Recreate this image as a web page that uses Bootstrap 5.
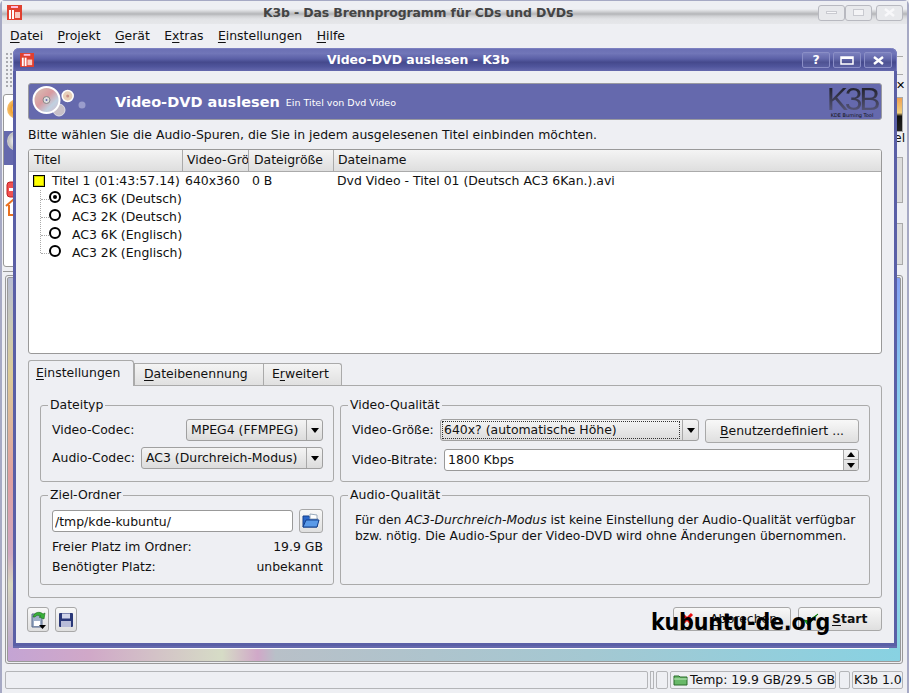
<!DOCTYPE html>
<html lang="de">
<head>
    <meta charset="UTF-8">
    <title>K3b - Das Brennprogramm für CDs und DVDs</title>
    <link rel="stylesheet" href="https://cdn.jsdelivr.net/npm/bootstrap@5.3.0/dist/css/bootstrap.min.css">
    <style>
        html, body { margin: 0; width: 909px; height: 693px; overflow: hidden; background: #eeeff3; }
        body, .btn, .form-control, legend { font: 12.45px/16px "DejaVu Sans", sans-serif; color: #111; }
        u { text-underline-offset: 2px; }

        /* main window */
        .main-win { position: relative; width: 909px; height: 693px; background: #eeeff3; border: 1px solid #a6a9c4; border-width: 1px 2px 0 2px; border-radius: 5px 5px 0 0; }
        .main-title { height: 23px; padding-left: 5px; background: linear-gradient(#eeeff3 0, #eeeff3 8px, #d8d9dc 10px, #b4b5b8 13px, #cfd0d3 15px, #e2e3e6 18px, #e6e7ea 23px); }
        .main-title-text { font-weight: 700; color: #444; letter-spacing: -.12px; margin-left: 241px; width: 312px; white-space: nowrap; }
        .deco-btn { width: 27px; height: 16px; border: 1px solid #b8b9c0; border-radius: 3px; background: #e8e9ec; }
        .deco-glyph { width: 11px; height: 7px; border: 1px solid #c9cad0; background: #f4f4f6; }
        .deco-dash { width: 11px; height: 3px; background: #f8f8fa; border: 1px solid #c9cad0; }
        .menu-row { height: 23px; padding-left: 8px; gap: 14.4px; }

        .work { height: 617px; }
        .top-zone { height: 228px; }
        .grip { width: 8px; height: 35px; margin: 5px 0 7px 3px; background: radial-gradient(circle, #a9aab0 1px, transparent 1px) 0 0 / 4px 4px; }
        .left-box { width: 60px; height: 173px; margin-left: 1px; background: #fff; border: 1px solid #999; border-radius: 3px; }
        .left-rule { width: 20px; margin: 4px 0 0 1px; border-top: 1px solid #999; }
        .sel-row { height: 34px; margin-top: 12px; background: #6569ad; }
        .disc-o { width: 20px; height: 20px; margin-left: 3px; border-radius: 50%; background: radial-gradient(circle, #fff 12%, #f0a030 40%, #f8d090 85%); }
        .disc-g { width: 20px; height: 20px; margin-left: 3px; border-radius: 50%; background: radial-gradient(circle, #fff 12%, #c0c0c0 60%, #eee 90%); }
        .right-col { width: 8px; margin-right: 4px; }
        .rs-btn { height: 19px; margin-top: 9px; border: 1px solid #aaa; border-right-width: 0; background: #f0f0f0; width: 8px; }
        .rs-x { font-size: 11px; line-height: 14px; margin: 4px 0 4px 1px; font-weight: 700; color: #000; white-space: nowrap; }
        .rs-img { height: 35px; background: linear-gradient(#f0a050 0, #f0d080 45%, #111 55%, #222 100%); border: 1px solid #aaa; }
        .rs-txt { line-height: 12px; margin: 0 0 13px -1px; white-space: nowrap; }
        .rs-gray { height: 46px; background: #dcdcdc; border: 1px solid #aaa; margin-bottom: 20px; }
        .rs-gray2 { height: 42px; background: #dcdcdc; border: 1px solid #aaa; }

        .rainbow-frame { height: 389px; margin: 0 4px 0 3px; padding: 1px; border: 1px solid #999; border-radius: 3px; }
        .rainbow {
            height: 100%; border: 1px solid #999; border-radius: 2px;
            background:
                linear-gradient(90deg, #c4a4d4 0, #d0a8c8 9%, #d6dcc6 24%, #d0a8c8 28%, #b8c0c8 30%, #a4c8d2 65%, #88d2e2 100%) bottom / 100% 14px no-repeat,
                linear-gradient(#b8bdd2 0, #c9c9b8 12%, #dccb98 25%, #e0a0a0 52%, #d0a8c0 72%, #d8d8c0 80%, #b8a0d0 100%) left / 50% 100% no-repeat,
                linear-gradient(#84a0f4 0, #88c8f0 25%, #98e0e8 60%, #88d2e2 100%) right / 50% 100% no-repeat;
        }

        .status-row { height: 18px; margin: 7px 4px 0 3px; gap: 2px; }
        .status-cell { height: 18px; border: 1px solid #b4b5b8; border-radius: 2px; line-height: 16px; padding: 0 2px; white-space: nowrap; }
        .grip-v { width: 4px; height: 18px; border: 1px solid #b4b5b8; }
        .st-blank { width: 12px; padding: 0; }
        .st-temp { width: 166px; }
        .st-temp svg { margin-right: 2px; }
        .st-blank2 { width: 11px; padding: 0; margin-left: 1px; }
        .st-ver { width: 51px; padding: 0 1px; }

        /* dialog */
        .dialog { position: absolute; left: 11px; top: 47px; width: 884px; height: 598px; background: #eeeff3; border: 3px solid #5a5fa6; border-top: 0; border-radius: 6px 6px 0 0; box-shadow: 0 2px 0 #6569ad; }
        .dialog::after { content: ""; position: absolute; left: 3px; right: 5px; bottom: -6px; height: 1px; background: #fff; }
        .dlg-title { height: 23px; margin: 0 -3px; padding-left: 6px; border-radius: 6px 6px 0 0; border: 1px solid #7c80c0; border-bottom: 0; color: #fff; background: linear-gradient(#6b70b4 0, #7176b8 20%, #5a5fa6 45%, #45498c 60%, #50559c 80%, #6569ad 100%); }
        .dlg-title-text { font-weight: 700; margin-left: 293px; width: 183px; white-space: nowrap; }
        .dlg-btns { gap: 3px; }
        .dlg-btn { width: 28px; height: 16px; border: 1px solid #8a8ec6; border-radius: 2px; background: rgba(255, 255, 255, .06); color: #fff; font-weight: 700; line-height: 14px; text-align: center; }
        .dlg-body { padding: 12px 12px 0 12px; }

        .banner { height: 37px; background: #6569ad; border: 1px solid #9a9aa0; border-radius: 3px; color: #fff; padding-left: 2px; }
        .banner-title { font-size: 14.5px; font-weight: 700; margin-left: 20px; white-space: nowrap; }
        .banner-sub { font-size: 9.5px; margin-left: 6px; padding-top: 3px; white-space: nowrap; }
        .k3b-logo { width: 54px; line-height: 1; text-align: center; margin-right: 2px; }
        .k3b-big { font: 32px/28px "Liberation Sans", sans-serif; letter-spacing: -3.3px; background: linear-gradient(#1c1c24, #5a5a80); -webkit-background-clip: text; background-clip: text; color: transparent; display: block; white-space: nowrap; }
        .k3b-small { font-size: 5px; line-height: 5px; color: #111; display: block; white-space: nowrap; }
        .info-line { height: 29px; line-height: 29px; white-space: nowrap; }

        .tree { height: 205px; background: #fff; border: 1px solid #999; border-radius: 3px; overflow: hidden; }
        .tree-head { height: 22px; background: linear-gradient(#f4f4f4, #dedede); border-bottom: 1px solid #aaa; }
        .tree-head > div { height: 21px; line-height: 20px; padding-left: 4px; border-right: 1px solid #aaa; overflow: hidden; white-space: nowrap; }
        .tree-head > .tw-1 { padding-left: 5px; }
        .tree-head > .tw-3 { padding-left: 5px; }
        .tw-1 { width: 154px; }
        .tw-2 { width: 66px; }
        .tw-3 { width: 85px; }
        .cell-p { padding-left: 2px; }
        .cell-q { padding-left: 3px; }
        .tree-row { height: 18px; line-height: 18px; white-space: nowrap; }
        .check-box { width: 12px; height: 12px; margin: 0 7px 0 4px; background: #ff0; border: 1px solid #000; box-shadow: inset 0 0 0 1px #cc0; flex: none; }
        .tree-kids { margin: 0 0 0 11px; height: 63px; border-left: 1px dotted #aaa; }
        .tree-kid { height: 18px; line-height: 18px; margin-left: 0; white-space: nowrap; }
        .tree-kid::before { content: ""; width: 8px; border-top: 1px dotted #aaa; }
        .radio-dot { width: 12px; height: 12px; margin-right: 11px; border: 2px solid #000; border-radius: 50%; background: #fff; display: flex; align-items: center; justify-content: center; position: relative; top: -2px; }
        .radio-dot.on::after { content: ""; width: 4px; height: 4px; background: #000; border-radius: 50%; }

        .tab-row { height: 31px; padding-top: 6px; border: 0; flex-wrap: nowrap; align-items: flex-end; }
        .tab-item { height: 22px; border: 1px solid #aaa; border-right-width: 0; border-bottom: 0; border-radius: 0; background: linear-gradient(#f4f4f4, #e0e0e0); color: #111; line-height: 20px; white-space: nowrap; }
        .tab-item:last-child { border-right-width: 1px; border-radius: 0 3px 0 0; }
        .tab-item.is-open { height: 26px; margin-bottom: -1px; background: #eeeff3; border: 1px solid #aaa; border-bottom: 0; border-radius: 3px 3px 0 0; line-height: 24px; position: relative; z-index: 1; }
        .tw-einst { width: 106px; padding-left: 7px; }
        .tw-datei { width: 129px; padding-left: 9px; }
        .tw-erw { width: 79px; padding-left: 8px; }
        .tab-panel { height: 213px; border: 1px solid #aaa; border-radius: 0 3px 3px 3px; padding: 12px 11px 0 11px; display: grid; grid-template-columns: 294px 530px; grid-template-rows: 90px 97px; column-gap: 6px; }

        fieldset.qt-group { border: 1px solid #aaa; border-radius: 3px; margin: 0; padding: 0 10px 0 11px; min-width: 0; }
        fieldset.qt-group legend { float: none; width: auto; margin: 0 0 0 -4px; padding: 0 2px; line-height: 14px; }
        .h-q { height: 84px; }
        .h-z { height: 97px; }
        .form-line { height: 22px; margin-top: 6px; white-space: nowrap; }
        .form-line.first { margin-top: 7px; }
        .form-line.spin-line { margin-top: 8px; }
        .lb-groesse { width: 88px; }
        .lb-bitrate { width: 92px; }

        .qt-btn { border: 1px solid #a8a8a8; border-radius: 3px; background: linear-gradient(#f8f8f8, #dfdfdf); padding: 0; white-space: nowrap; }
        .combo { height: 22px; border: 1px solid #a0a0a0; border-radius: 3px; background: linear-gradient(#f4f4f4, #dcdcdc); line-height: 20px; white-space: nowrap; }
        .cw-mpeg { width: 137px; }
        .cw-ac3 { width: 182px; }
        .cw-size { width: 259px; }
        .combo-val { padding: 0 4px; flex: 1 1 auto; }
        .combo-val.has-focus { margin: 2px 3px 2px 2px; padding: 0 1px; line-height: 15px; outline: 1px dotted #333; }
        .combo-arrow { width: 16px; border-left: 1px solid #a8a8a8; display: flex; align-items: center; justify-content: center; }
        .combo-arrow::after { content: ""; border: 4px solid transparent; border-top: 5px solid #000; border-bottom: 0; }
        .custom-btn { width: 154px; height: 24px; align-self: flex-start; }
        .qt-input.form-control { width: 241px; height: 22px; border: 1px solid #999; border-radius: 3px; padding: 0 2px; box-shadow: none; min-height: 0; color: #111; }
        .folder-row { height: 24px; margin-top: 7px; }
        .folder-btn { width: 24px; height: 24px; }
        .spin { height: 22px; background: #fff; border: 1px solid #999; border-radius: 3px; line-height: 20px; padding-left: 3px; overflow: hidden; }
        .spin-btns { width: 15px; border-left: 1px solid #a8a8a8; background: linear-gradient(#f4f4f4, #dcdcdc); }
        .spin-btns > div { height: 50%; display: flex; align-items: center; justify-content: center; }
        .spin-up { border-bottom: 1px solid #a8a8a8; }
        .spin-up::after { content: ""; border: 4px solid transparent; border-bottom: 5px solid #000; border-top: 0; }
        .spin-down::after { content: ""; border: 4px solid transparent; border-top: 5px solid #000; border-bottom: 0; }
        .audio-text { margin: 10px 0 0 3px; font-size: 12.3px; line-height: 16px; white-space: nowrap; }
        .space-line { height: 20px; line-height: 20px; }

        .footer-row { height: 25px; margin-top: 9px; }
        .icon-btn { width: 22px; height: 25px; margin-right: 6px; display: flex; align-items: center; justify-content: center; }
        .icon-btn:first-child { margin-left: -1px; }
        .dlg-foot { height: 24px; display: flex; align-items: center; }
        .abort-btn { width: 118px; margin-right: 7px; padding-left: 6px; }
        .start-btn { width: 84px; padding-left: 4px; font-weight: 700; }
        .start-btn svg { margin-right: 13px; }

        .watermark { position: absolute; left: 649px; top: 605px; font: 700 23px/32px "DejaVu Sans", sans-serif; font-stretch: condensed; letter-spacing: -.2px; color: #000; white-space: nowrap; z-index: 5; }
    </style>
</head>
<body>
    <div class="main-win">
        <div class="main-title d-flex align-items-center">
            <svg width="15" height="15" viewBox="0 0 15 15" class="flex-shrink-0"><rect width="15" height="15" fill="#e04030"/><rect x="2" y="5" width="2" height="9" fill="#fff"/><rect x="5" y="5" width="2" height="9" fill="#fff"/><rect x="8" y="7" width="5" height="6" fill="#f8c8c0"/><rect x="4" y="1" width="7" height="2" fill="#fbd"/></svg>
            <div class="main-title-text">K3b - Das Brennprogramm für CDs und DVDs</div>
            <div class="ms-auto d-flex me-1">
                <div class="deco-btn d-flex align-items-center justify-content-center"><div class="deco-dash"></div></div>
                <div class="deco-btn d-flex align-items-center justify-content-center me-1"><div class="deco-glyph"></div></div>
                <div class="deco-btn d-flex align-items-center justify-content-center">
                    <svg width="13" height="9" viewBox="0 0 13 9"><path d="M2 1l9 7M11 1l-9 7" stroke="#f8f8fa" stroke-width="2.5"/></svg>
                </div>
            </div>
        </div>
        <div class="menu-row d-flex align-items-center">
            <span><u>D</u>atei</span><span><u>P</u>rojekt</span><span><u>G</u>erät</span><span>E<u>x</u>tras</span><span><u>E</u>instellungen</span><span><u>H</u>ilfe</span>
        </div>

        <div class="work">
            <div class="top-zone d-flex justify-content-between">
                <div>
                    <div class="grip"></div>
                    <div class="left-box">
                        <div class="disc-o mt-1"></div>
                        <div class="sel-row"><div class="disc-g"></div></div>
                        <svg class="d-block mt-3" width="34" height="36" viewBox="4 0 34 36"><rect x="7" y="1" width="14" height="15" rx="3" fill="#f05050" stroke="#c02020"/><rect x="9" y="7" width="10" height="3" fill="#fff"/><path d="M6 25l8-7 8 7M9 24v10h10V24" fill="#fff" stroke="#e87020" stroke-width="2"/></svg>
                    </div>
                    <div class="left-rule"></div>
                </div>
                <div class="right-col">
                    <div class="rs-btn"></div>
                    <div class="rs-x">✕</div>
                    <div class="rs-img"></div>
                    <div class="rs-txt">el</div>
                    <div class="rs-gray"></div>
                    <div class="rs-gray2"></div>
                </div>
            </div>
            <div class="rainbow-frame"><div class="rainbow"></div></div>
        </div>

        <div class="status-row d-flex">
            <div class="status-cell flex-grow-1"></div>
            <div class="grip-v"></div>
            <div class="status-cell st-blank"></div>
            <div class="status-cell st-temp d-flex align-items-center">
                <svg class="flex-shrink-0" width="15" height="12" viewBox="0 0 15 12"><path d="M1 2h5l1 1h7v8H1z" fill="#68b868" stroke="#2a6a2a"/><path d="M1 5h13" stroke="#c0e8c0"/></svg>Temp: 19.9 GB/29.5 GB
            </div>
            <div class="status-cell st-blank2"></div>
            <div class="status-cell st-ver">K3b 1.0</div>
        </div>

        <div class="dialog">
            <div class="dlg-title d-flex align-items-center">
                <svg width="14" height="14" viewBox="0 0 15 15" class="flex-shrink-0"><rect width="15" height="15" fill="#e04030"/><rect x="2" y="5" width="2" height="9" fill="#fff"/><rect x="5" y="5" width="2" height="9" fill="#fff"/><rect x="8" y="7" width="5" height="6" fill="#f8c8c0"/><rect x="4" y="1" width="7" height="2" fill="#fbd"/></svg>
                <div class="dlg-title-text">Video-DVD auslesen - K3b</div>
                <div class="dlg-btns ms-auto d-flex me-1">
                    <div class="dlg-btn">?</div>
                    <div class="dlg-btn d-flex align-items-center justify-content-center"><svg width="14" height="9" viewBox="0 0 14 9"><path d="M1 1h12v7H1z" fill="none" stroke="#fff" stroke-width="1.5"/><path d="M1 2h12" stroke="#fff" stroke-width="2"/></svg></div>
                    <div class="dlg-btn d-flex align-items-center justify-content-center"><svg width="11" height="9" viewBox="0 0 11 9"><path d="M1 1l9 7M10 1l-9 7" stroke="#fff" stroke-width="2.4"/></svg></div>
                </div>
            </div>

            <div class="dlg-body">
                <div class="banner d-flex align-items-center">
                    <svg width="64" height="34" viewBox="0 0 64 34" class="flex-shrink-0">
                        <defs><linearGradient id="dvdFace" x1="0" y1="0" x2="1" y2="1"><stop offset="0" stop-color="#d8c8b8"/><stop offset=".45" stop-color="#d89aa0"/><stop offset=".7" stop-color="#c0d0e0"/><stop offset="1" stop-color="#d8b8c8"/></linearGradient></defs>
                        <circle cx="28" cy="25" r="6" fill="#c8c0c8" stroke="#e0e0e8"/>
                        <circle cx="15.500" cy="15" r="13" fill="url(#dvdFace)" stroke="#fff" stroke-width="2"/>
                        <circle cx="15.500" cy="15" r="3.500" fill="#ddd" stroke="#888"/>
                        <circle cx="15.500" cy="15" r="1" fill="#6569ad"/>
                        <circle cx="36.700" cy="11" r="5.500" fill="#e8d0b8" stroke="#fff" stroke-width="1.500"/>
                        <circle cx="36.700" cy="11" r="1.500" fill="#c89088"/>
                        <circle cx="51" cy="20" r="3.500" fill="#9a9ccc"/>
                    </svg>
                    <span class="banner-title">Video-DVD auslesen</span>
                    <span class="banner-sub">Ein Titel von Dvd Video</span>
                    <div class="k3b-logo ms-auto"><span class="k3b-big">K3B</span><span class="k3b-small">KDE Burning Tool</span></div>
                </div>

                <div class="info-line">Bitte wählen Sie die Audio-Spuren, die Sie in jedem ausgelesenen Titel einbinden möchten.</div>

                <div class="tree">
                    <div class="tree-head d-flex">
                        <div class="tw-1">Titel</div>
                        <div class="tw-2">Video-Größe</div>
                        <div class="tw-3">Dateigröße</div>
                        <div class="flex-grow-1 border-end-0">Dateiname</div>
                    </div>
                    <div class="tree-row d-flex align-items-center">
                        <div class="tw-1 d-flex align-items-center"><span class="check-box"></span>Titel 1 (01:43:57.14)</div>
                        <div class="tw-2 cell-p">640x360</div>
                        <div class="tw-3 cell-q">0 B</div>
                        <div class="cell-q">Dvd Video - Titel 01 (Deutsch AC3 6Kan.).avi</div>
                    </div>
                    <div class="tree-kids">
                        <div class="tree-kid d-flex align-items-center"><span class="radio-dot on"></span>AC3 6K (Deutsch)</div>
                        <div class="tree-kid d-flex align-items-center"><span class="radio-dot"></span>AC3 2K (Deutsch)</div>
                        <div class="tree-kid d-flex align-items-center"><span class="radio-dot"></span>AC3 6K (Englisch)</div>
                        <div class="tree-kid d-flex align-items-center"><span class="radio-dot"></span>AC3 2K (Englisch)</div>
                    </div>
                </div>

                <ul class="nav tab-row mb-0">
                    <li class="tab-item is-open tw-einst"><u>E</u>instellungen</li>
                    <li class="tab-item tw-datei"><u>D</u>ateibenennung</li>
                    <li class="tab-item tw-erw">E<u>r</u>weitert</li>
                </ul>
                <div class="tab-panel">
                    <fieldset class="qt-group h-q">
                        <legend>Dateityp</legend>
                        <div class="form-line first d-flex align-items-center">
                            <span>Video-Codec:</span>
                            <div class="combo cw-mpeg d-flex ms-auto"><span class="combo-val">MPEG4 (FFMPEG)</span><span class="combo-arrow"></span></div>
                        </div>
                        <div class="form-line d-flex align-items-center">
                            <span>Audio-Codec:</span>
                            <div class="combo cw-ac3 d-flex ms-auto"><span class="combo-val">AC3 (Durchreich-Modus)</span><span class="combo-arrow"></span></div>
                        </div>
                    </fieldset>
                    <fieldset class="qt-group h-q">
                        <legend>Video-Qualität</legend>
                        <div class="form-line first d-flex align-items-center">
                            <span class="lb-groesse">Video-Größe:</span>
                            <div class="combo cw-size d-flex"><span class="combo-val has-focus">640x? (automatische Höhe)</span><span class="combo-arrow"></span></div>
                            <button type="button" class="btn qt-btn custom-btn ms-auto"><u>B</u>enutzerdefiniert ...</button>
                        </div>
                        <div class="form-line spin-line d-flex align-items-center">
                            <span class="lb-bitrate">Video-Bitrate:</span>
                            <div class="spin d-flex flex-grow-1"><span class="flex-grow-1">1800 Kbps</span><div class="spin-btns"><div class="spin-up"></div><div class="spin-down"></div></div></div>
                        </div>
                    </fieldset>
                    <fieldset class="qt-group h-z">
                        <legend>Ziel-Ordner</legend>
                        <div class="folder-row d-flex align-items-center">
                            <input class="form-control qt-input" value="/tmp/kde-kubuntu/">
                            <button type="button" class="btn qt-btn folder-btn ms-auto d-flex align-items-center justify-content-center">
                                <svg width="18" height="16" viewBox="0 0 18 16"><path d="M1 3h6l1 2h7v9H1z" fill="#2a66c8" stroke="#14408c"/><path d="M8 1l7 1v4H8z" fill="#fff" stroke="#9ab"/><path d="M4 7h13l-2 7H1z" fill="#5a9ae8" stroke="#14408c"/></svg>
                            </button>
                        </div>
                        <div class="space-line d-flex justify-content-between mt-1"><span>Freier Platz im Ordner:</span><span>19.9 GB</span></div>
                        <div class="space-line d-flex justify-content-between"><span>Benötigter Platz:</span><span>unbekannt</span></div>
                    </fieldset>
                    <fieldset class="qt-group h-z">
                        <legend>Audio-Qualität</legend>
                        <div class="audio-text">Für den <em>AC3-Durchreich-Modus</em> ist keine Einstellung der Audio-Qualität verfügbar<br>bzw. nötig. Die Audio-Spur der Video-DVD wird ohne Änderungen übernommen.</div>
                    </fieldset>
                </div>

                <div class="footer-row d-flex align-items-start">
                    <button type="button" class="btn qt-btn icon-btn">
                        <svg width="18" height="21" viewBox="0 0 18 21"><path d="M3 5h10v13H3z" fill="#9fb0c8" stroke="#56688a"/><rect x="5" y="12" width="6" height="5" fill="#fff"/><path d="M4 8c1-5 7-6 10-3l2-1-1 6-5-2 2-1c-2-1-5-1-6 1z" fill="#38b038" stroke="#186818" stroke-width=".6"/><path d="M10 16h7l-3.500 4z" fill="#000"/></svg>
                    </button>
                    <button type="button" class="btn qt-btn icon-btn">
                        <svg width="16" height="16" viewBox="0 0 16 16"><rect x="1" y="1" width="14" height="14" rx="1" fill="#2a3878"/><rect x="4" y="1.500" width="8" height="5" fill="#d0d4e8"/><rect x="3" y="9" width="10" height="6" fill="#b8bcd8"/></svg>
                    </button>
                    <button type="button" class="btn qt-btn dlg-foot abort-btn ms-auto">
                        <svg class="me-3" width="14" height="14" viewBox="0 0 14 14"><path d="M2 2l10 10M12 2L2 12" stroke="#e81010" stroke-width="3"/></svg><span><u>A</u>bbrechen</span>
                    </button>
                    <button type="button" class="btn qt-btn dlg-foot start-btn">
                        <svg width="16" height="14" viewBox="0 0 16 14"><path d="M1 8l4 5L15 2 5 9z" fill="#18b018" stroke="#0c7a0c"/></svg><span><u>S</u>tart</span>
                    </button>
                </div>
            </div>
        </div>

        <div class="watermark">kubuntu-de.org</div>
    </div>
</body>
</html>
